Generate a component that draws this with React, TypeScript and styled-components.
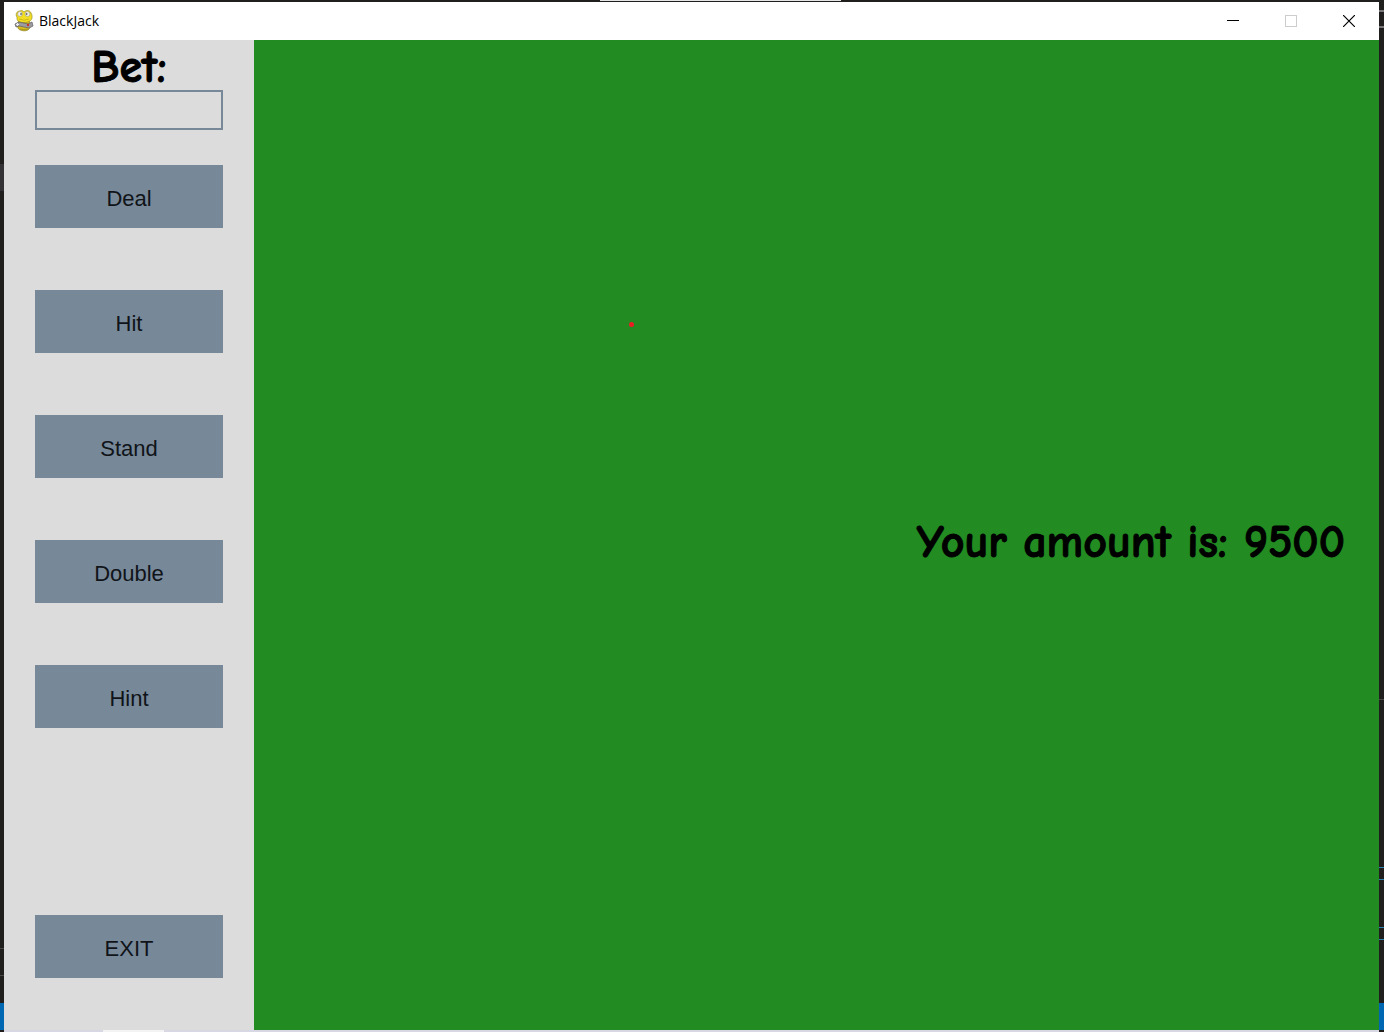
import React, { useState } from "react";
import styled, { createGlobalStyle } from "styled-components";

const GlobalStyle = createGlobalStyle`
  *, *::before, *::after { box-sizing: border-box; }
  html, body { margin: 0; height: 100%; }
  #root { height: 100%; }
`;

const Desktop = styled.div`
  position: relative;
  min-height: 100vh;
  display: flex;
  flex-direction: column;
  padding: 2px 5px 0 4px;
  background: #211f1e;
`;

const Edge = styled.div<{ $side: "left" | "right"; $top: number; $height: number; $color: string }>`
  position: absolute;
  ${(p) => p.$side}: 0;
  top: ${(p) => p.$top}px;
  width: ${(p) => (p.$side === "left" ? 4 : 5)}px;
  height: ${(p) => p.$height}px;
  background: ${(p) => p.$color};
`;

const TopStrip = styled.div`
  position: absolute;
  top: 0;
  left: 600px;
  width: 241px;
  height: 1px;
  background: #e6e6e6;
`;

const Taskbar = styled.div`
  height: 2px;
  padding-left: 99px;
  background: #d8d8e4;
`;

const TaskbarItem = styled.div`
  width: 61px;
  height: 2px;
  background: #f3f3f3;
`;

const Window = styled.main`
  flex: 1;
  display: flex;
  flex-direction: column;
`;

const TitleBar = styled.header`
  height: 38px;
  display: flex;
  align-items: center;
  padding: 0 1px 0 10px;
  background: #ffffff;
`;

const Title = styled.h1`
  flex: 1;
  margin: 0 0 0 5px;
  font: 400 14px/20px "Segoe UI", "Open Sans", sans-serif;
  color: #000000;
`;

const CaptionButton = styled.button`
  width: 58px;
  height: 38px;
  display: grid;
  place-items: center;
  padding: 0;
  border: 0;
  background: transparent;
  color: #000000;
  &:disabled { color: #cccccc; }
`;

const Game = styled.div`
  flex: 1;
  display: flex;
`;

const Sidebar = styled.aside`
  width: 250px;
  display: flex;
  flex-direction: column;
  padding: 6px 31px 0;
  background: #dcdcdc;
`;

const BetLabel = styled.label`
  font: 700 46px/44px "Comic Sans MS", "Comic Neue", Lato, sans-serif;
  -webkit-text-stroke: 1px #000000;
  text-align: center;
  color: #000000;
`;

const BetInput = styled.input`
  width: 100%;
  height: 40px;
  padding: 0 8px;
  border: 2px solid #778899;
  border-radius: 0;
  background: transparent;
  font: 24px "Liberation Sans", sans-serif;
  outline: none;
`;

const Actions = styled.div`
  display: flex;
  flex-direction: column;
  gap: 62px;
  padding: 35px 0 187px;
`;

const ActionButton = styled.button`
  width: 100%;
  height: 63px;
  padding: 4px 0 0;
  border: 0;
  background: #778899;
  font: 400 22px/30px "Liberation Sans", Arial, sans-serif;
  color: #101418;
`;

const Table = styled.section`
  position: relative;
  flex: 1;
  display: flex;
  align-items: center;
  justify-content: flex-end;
  padding: 16px 34px 0 0;
  background: #228b22;
`;

const Amount = styled.p`
  margin: 0;
  font: 700 46px/60px "Comic Sans MS", "Comic Neue", Lato, sans-serif;
  -webkit-text-stroke: 1px #000000;
  color: #000000;
`;

const Marker = styled.span`
  position: absolute;
  left: 375px;
  top: 282px;
  width: 5px;
  height: 5px;
  border-radius: 50%;
  background: #ed1c24;
`;

const SnakeIcon = () => (
  <svg width="20" height="22" viewBox="0 0 20 22" aria-hidden="true">
    <path d="M6 10 C3 12 3 15 4 18 C5 21 13 22 15 19 C17 17 17 12 14 10Z" fill="#d8bd1c" stroke="#8a7d1e" strokeWidth=".7" />
    <path d="M3 7 C1 4 3 1 6 1 C8 0 9 1 10 2 C12 0 16 0 17 3 C19 6 18 10 16 11 C13 13 6 13 4 11 C3 10 3 9 3 7Z" fill="#f3df22" stroke="#9a8c1f" strokeWidth=".7" />
    <circle cx="6" cy="4" r="2.4" fill="#f4f4ec" stroke="#888" strokeWidth=".5" />
    <circle cx="13.5" cy="4" r="2.4" fill="#f4f4ec" stroke="#888" strokeWidth=".5" />
    <circle cx="7" cy="4" r=".8" fill="#222" />
    <circle cx="12.7" cy="4" r=".8" fill="#222" />
    <path d="M5 9 Q10 11.500 15 9" fill="none" stroke="#c4ad18" strokeWidth=".8" />
    <path d="M1 14 L5 12 L14 14 L18 12 L19 16 L15 18 L5 16 L2 17Z" fill="#9c9ca0" stroke="#5c5c62" strokeWidth=".7" />
    <path d="M2 14.500h3M3.500 13v3" stroke="#eee" />
    <circle cx="14" cy="15" r="1.200" fill="#c8352c" />
    <path d="M6 19 Q10 20.500 14 19" fill="none" stroke="#9a8c1c" strokeWidth=".8" />
  </svg>
);

const ACTIONS = ["Deal", "Hit", "Stand", "Double", "Hint"];

export default function App() {
  const [bet, setBet] = useState("");
  return (
    <Desktop>
      <GlobalStyle />
      <TopStrip />
      <Edge $side="left" $top={164} $height={27} $color="#343235" />
      <Edge $side="left" $top={948} $height={1} $color="#4a4846" />
      <Edge $side="left" $top={975} $height={1} $color="#4a4846" />
      <Edge $side="left" $top={1003} $height={27} $color="#0068b3" />
      <Edge $side="right" $top={10} $height={2} $color="#77777a" />
      <Edge $side="right" $top={26} $height={2} $color="#77777a" />
      <Edge $side="right" $top={699} $height={1} $color="#4a4846" />
      <Edge $side="right" $top={867} $height={1} $color="#2b83ae" />
      <Edge $side="right" $top={879} $height={1} $color="#2b83ae" />
      <Edge $side="right" $top={927} $height={1} $color="#2b83ae" />
      <Edge $side="right" $top={939} $height={1} $color="#2b83ae" />
      <Edge $side="right" $top={1003} $height={27} $color="#0068b3" />
      <Window>
        <TitleBar>
          <SnakeIcon />
          <Title>BlackJack</Title>
          <CaptionButton aria-label="Minimize">
            <svg width="12" height="12" viewBox="0 0 12 12" shapeRendering="crispEdges">
              <path d="M0 5.500H12" stroke="currentColor" />
            </svg>
          </CaptionButton>
          <CaptionButton aria-label="Maximize" disabled>
            <svg width="12" height="12" viewBox="0 0 12 12" shapeRendering="crispEdges">
              <rect x=".5" y=".5" width="11" height="11" fill="none" stroke="currentColor" />
            </svg>
          </CaptionButton>
          <CaptionButton aria-label="Close">
            <svg width="12" height="12" viewBox="0 0 12 12">
              <path d="M0 0L12 12M12 0L0 12" stroke="currentColor" strokeWidth="1.200" />
            </svg>
          </CaptionButton>
        </TitleBar>
        <Game>
          <Sidebar>
            <BetLabel htmlFor="bet">Bet:</BetLabel>
            <BetInput id="bet" value={bet} onChange={(e) => setBet(e.target.value)} />
            <Actions>
              {ACTIONS.map((name) => (
                <ActionButton key={name}>{name}</ActionButton>
              ))}
            </Actions>
            <ActionButton>EXIT</ActionButton>
          </Sidebar>
          <Table>
            <Marker />
            <Amount>Your amount is: 9500</Amount>
          </Table>
        </Game>
      </Window>
      <Taskbar>
        <TaskbarItem />
      </Taskbar>
    </Desktop>
  );
}
